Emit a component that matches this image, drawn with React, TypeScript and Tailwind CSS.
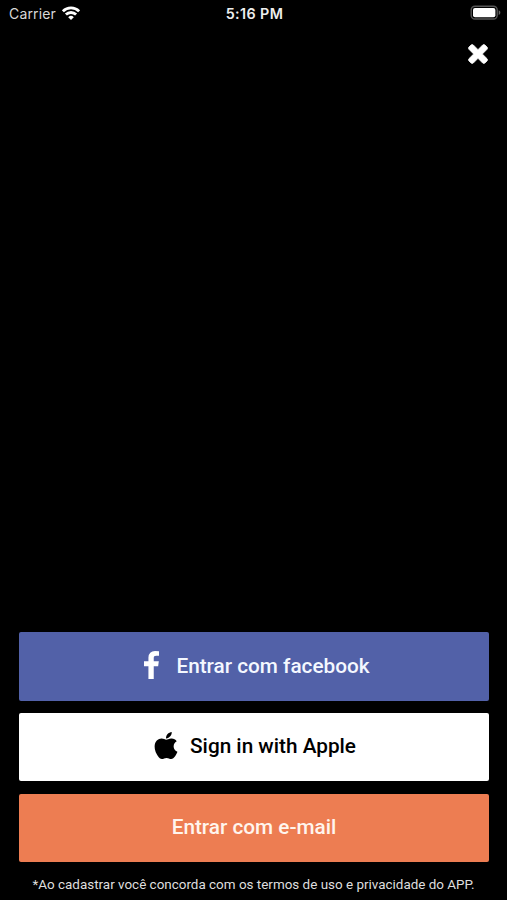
import clsx from 'clsx';
import { FaApple } from 'react-icons/fa';

interface LoginButtonProps {
  label: string;
  className: string;
  labelClassName?: string;
  icon?: React.ReactNode;
}

function WifiIcon() {
  return (
    <svg viewBox="0 0 18 14" className="-mt-px h-[14px] w-[18px]" fill="none" stroke="#fff" strokeWidth="2.8">
      <path d="M.9 5.3a11.5 11.5 0 0 1 16.2 0" />
      <path d="M3.9 8.6a7.2 7.2 0 0 1 10.2 0" />
      <path d="M9 14 6.2 11.2a4 4 0 0 1 5.6 0z" fill="#fff" stroke="none" />
    </svg>
  );
}

function BatteryIcon() {
  return (
    <svg viewBox="0 0 31 16" className="-mt-px h-[16px] w-[31px]">
      <rect x="1.2" y="1.2" width="26" height="12.8" rx="3.8" fill="none" stroke="#565656" strokeWidth="1.4" />
      <rect x="3" y="3" width="22.4" height="9.2" rx="2" fill="#fff" />
      <path d="M28.7 5.3c2.2.8 2.2 3.8 0 4.6z" fill="#666" />
    </svg>
  );
}

function CloseIcon() {
  return (
    <svg
      viewBox="272 336 1248 1248"
      className="h-[20px] w-[20px]"
      fill="#fff"
      stroke="#fff"
      strokeWidth="50"
      preserveAspectRatio="none"
    >
      <path d="M1490 1322q0 40-28 68l-136 136q-28 28-68 28t-68-28l-294-294-294 294q-28 28-68 28t-68-28l-136-136q-28-28-28-68t28-68l294-294-294-294q-28-28-28-68t28-68l136-136q28-28 68-28t68 28l294 294 294-294q28-28 68-28t68 28l136 136q28 28 28 68t-28 68l-294 294 294 294q28 28 28 68z" />
    </svg>
  );
}

function FacebookIcon() {
  return (
    <svg viewBox="95 0 864 1664" className="-mt-[2px] h-[28px] w-[15px]" fill="#fff" preserveAspectRatio="none">
      <path d="M959 12v264h-157q-86 0-116 36t-30 108v189h293l-39 296h-254v759h-306v-759h-255v-296h255v-218q0-186 104-288.5t277-102.5q147 0 228 12z" />
    </svg>
  );
}

function StatusBar() {
  return (
    <div className="grid h-[27px] grid-cols-3 items-center pr-[6px] pl-[9px] font-['Inter',sans-serif] text-[14px]">
      <div className="flex items-center gap-[6px] text-[#d8d8d8]">
        <span className="tracking-[0.15px]">Carrier</span>
        <WifiIcon />
      </div>
      <span className="pr-px text-center text-[14.3px] font-semibold tracking-[0.4px] whitespace-nowrap text-[#eee]">
        5:16 PM
      </span>
      <div className="flex justify-end">
        <BatteryIcon />
      </div>
    </div>
  );
}

function LoginButton({ label, className, labelClassName, icon }: LoginButtonProps) {
  return (
    <button
      className={clsx(
        'flex h-[68.5px] w-full items-center justify-center rounded-[2px] text-[20.75px] font-medium',
        className,
      )}
    >
      {icon}
      <span className={clsx('whitespace-nowrap', labelClassName)}>{label}</span>
    </button>
  );
}

export default function App() {
  return (
    <div className="flex h-[900px] w-[507px] flex-col overflow-hidden bg-black font-['Roboto',sans-serif]">
      <StatusBar />

      <div className="flex justify-end pt-[17px] pr-[19px]">
        <button aria-label="Fechar">
          <CloseIcon />
        </button>
      </div>

      {/* Login options */}
      <div className="mt-auto flex flex-col gap-[12.2px] pr-[18px] pl-[19px]">
        <LoginButton
          label="Entrar com facebook"
          className="gap-[17px] bg-[#5261a8] pl-[6px] text-[#f4f8ff]"
          icon={<FacebookIcon />}
        />
        <LoginButton
          label="Sign in with Apple"
          className="gap-[12px] bg-white pl-[2px] text-black"
          labelClassName="-mt-px"
          icon={<FaApple className="-mt-[4px] h-[31px] w-[24px]" />}
        />
        <LoginButton label="Entrar com e-mail" className="bg-[#ed7d52] text-[#fff5ee]" />
      </div>

      <p className="h-[38px] pt-[13px] text-center text-[13.45px] leading-[20px] whitespace-nowrap text-[#dedede]">
        *Ao cadastrar você concorda com os termos de uso e privacidade do APP.
      </p>
    </div>
  );
}
